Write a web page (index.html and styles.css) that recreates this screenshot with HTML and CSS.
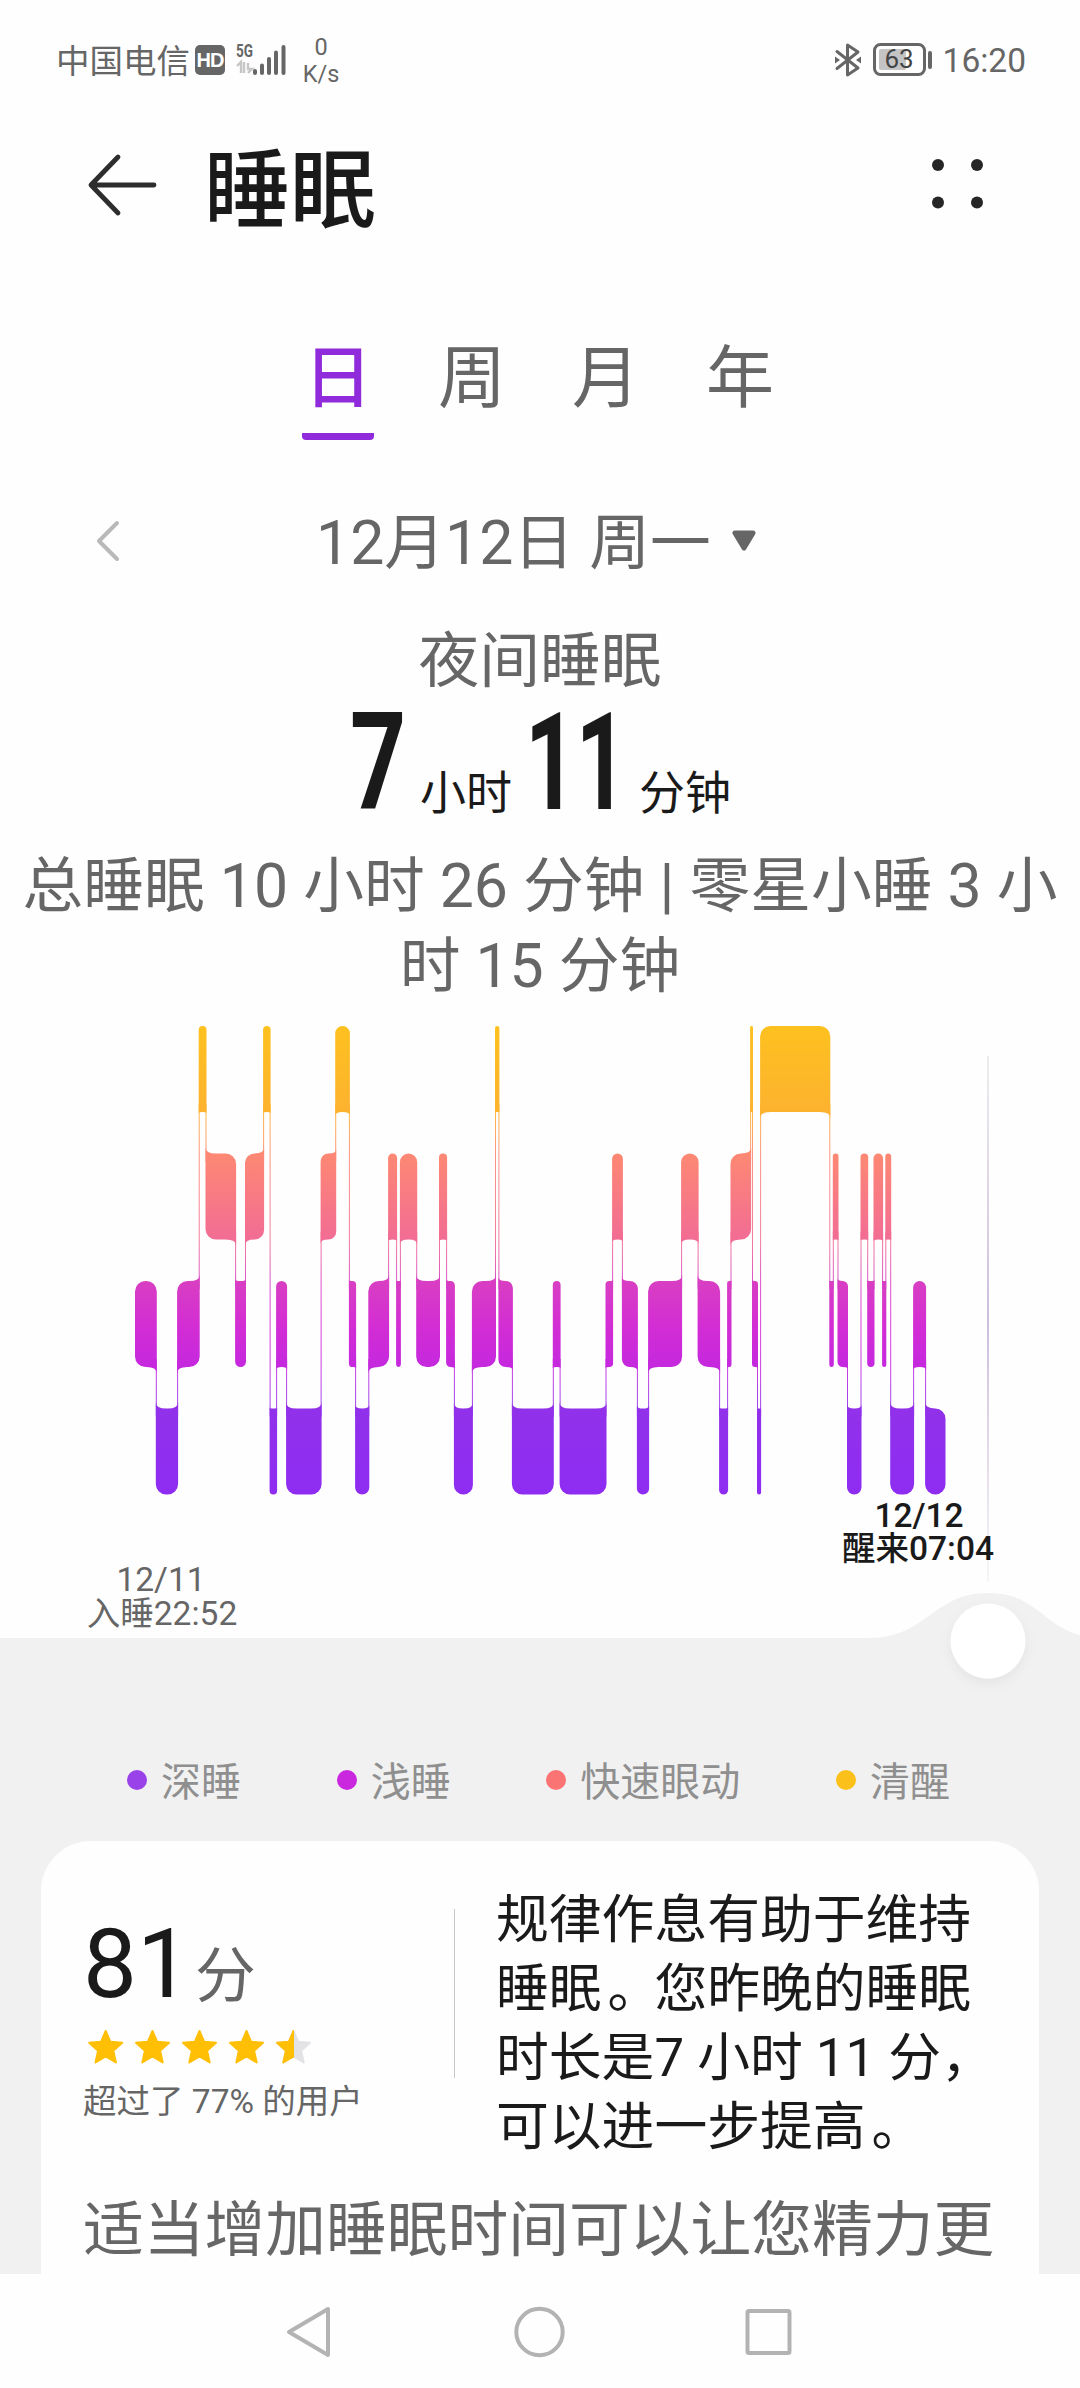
FILE: index.html
```html
<!DOCTYPE html>
<html lang="zh-CN">
<head>
<meta charset="utf-8">
<title>睡眠</title>
<link rel="stylesheet" href="styles.css">
</head>
<body>
<div class="screen">
  <div class="status">
    <span class="carrier">中国电信</span>
    <span class="hd">HD</span>
    <svg class="signal" width="52" height="36" viewBox="0 0 52 36">
      <text class="five-g" x="1" y="16" textLength="17" lengthAdjust="spacingAndGlyphs">5G</text>
      <path d="M2 25l4-4v11M9 21v11M13 32l4-4h-4v-6" fill="none" stroke="#c6c6c6" stroke-width="2.4"/>
      <g stroke="#666" stroke-width="4" stroke-linecap="round">
        <path d="M20 30v2M27 24.500v7.500M34 18v14M41 11.500v20.500M48.500 6v26"/>
      </g>
    </svg>
    <span class="speed">0<br>K/s</span>
    <span class="fill"></span>
    <svg class="bt" width="28" height="36" viewBox="0 0 28 36">
      <path d="M2 9.500 L23 26 L12.500 33 V3 L23 10 L2 26.500" fill="none" stroke="#666" stroke-width="3" stroke-linejoin="round" stroke-linecap="round"/>
      <path d="M0 14.500l5 3.500l-5 3.500zM26 14.500l-5 3.500l5 3.500z" fill="#666"/>
    </svg>
    <svg class="battery" width="62" height="36" viewBox="0 0 62 36">
      <rect x="1.500" y="3.500" width="50" height="30" rx="6" fill="none" stroke="#666" stroke-width="3"/>
      <rect x="6" y="8" width="27" height="21" rx="2" fill="#c4c4c4"/>
      <text class="level" x="26" y="27">63</text>
      <path d="M57 12v14" stroke="#666" stroke-width="4" stroke-linecap="round"/>
    </svg>
    <span class="clock">16:20</span>
  </div>

  <div class="header">
    <svg width="72" height="66" viewBox="0 0 72 66">
      <path d="M32 5L5 33H68M5 33L32 61" fill="none" stroke="#2d2d2d" stroke-width="4.800" stroke-linecap="round" stroke-linejoin="round"/>
    </svg>
    <h1>睡眠</h1>
    <span class="fill"></span>
    <svg width="52" height="52" viewBox="0 0 52 52" fill="#262626">
      <circle cx="6" cy="6" r="6"/><circle cx="45" cy="6" r="6"/>
      <circle cx="6" cy="43.500" r="6"/><circle cx="45" cy="43.500" r="6"/>
    </svg>
  </div>

  <div class="tabs">
    <span class="tab active">日</span><span class="tab">周</span><span class="tab">月</span><span class="tab">年</span>
  </div>

  <div class="date">
    <svg class="prev" width="28" height="44" viewBox="0 0 28 44">
      <path d="M22 4L4 22L22 40" fill="none" stroke="#b9b9b9" stroke-width="4" stroke-linecap="round" stroke-linejoin="round"/>
    </svg>
    <span class="day">12月12日 周一</span>
    <svg class="caret" width="26" height="22" viewBox="0 0 26 22">
      <path d="M4 3H22L13 18Z" fill="#666" stroke="#666" stroke-width="5" stroke-linejoin="round"/>
    </svg>
  </div>

  <div class="night">夜间睡眠</div>
  <div class="total"><span class="num one"><b>7</b></span><span class="unit">小时</span><span class="num two"><b>11</b></span><span class="unit">分钟</span></div>
  <div class="summary">总睡眠 10 小时 26 分钟 | 零星小睡 3 小<br>时 15 分钟</div>

  <svg class="chart" width="1080" height="738" viewBox="0 1000 1080 738">
    <defs>
      <linearGradient id="stage" gradientUnits="userSpaceOnUse" x1="0" y1="1026" x2="0" y2="1495">
        <stop offset="0" stop-color="#fdc11f"/>
        <stop offset=".184" stop-color="#fdb22f"/>
        <stop offset=".272" stop-color="#fd8873"/>
        <stop offset=".456" stop-color="#f26c94"/>
        <stop offset=".544" stop-color="#d83fc2"/>
        <stop offset=".64" stop-color="#d32dd4"/>
        <stop offset=".728" stop-color="#c428de"/>
        <stop offset=".816" stop-color="#9131ea"/>
        <stop offset="1" stop-color="#8e2cf2"/>
      </linearGradient>
      <linearGradient id="cursor" x1="0" y1="0" x2="0" y2="1">
        <stop offset="0" stop-color="#ededed"/>
        <stop offset=".5" stop-color="#cdbfdc"/>
        <stop offset="1" stop-color="#f6f6f6"/>
      </linearGradient>
      <filter id="soft" x="-50%" y="-50%" width="200%" height="200%">
        <feDropShadow dx="0" dy="5" stdDeviation="6" flood-color="#000" flood-opacity=".05"/>
      </filter>
    </defs>
    <path d="M0 1638H868C928 1638 932 1593 988 1593C1036 1593 1042 1625 1080 1635V1738H0Z" fill="#f1f1f1"/>
    <rect x="987" y="1056" width="2" height="526" fill="url(#cursor)"/>
    <g id="stages" fill="url(#stage)"></g>
    <circle cx="988" cy="1641" r="37.500" fill="#fff" filter="url(#soft)"/>
    <g class="start"><text x="161" y="1591">12/11</text><text x="162" y="1625">入睡22:52</text></g>
    <g class="end"><text x="919" y="1527">12/12</text><text x="918" y="1560">醒来07:04</text></g>
  </svg>

  <div class="lower">
    <div class="legend">
      <div class="key deep"><span>深睡</span></div><div class="key light"><span>浅睡</span></div><div class="key rem"><span>快速眼动</span></div><div class="key awake"><span>清醒</span></div>
    </div>
    <div class="card">
      <div class="row">
        <div class="score">
          <div class="points"><span class="big">81</span><span class="fen">分</span></div>
          <svg class="stars" width="240" height="36" viewBox="0 0 240 36">
            <defs>
              <path id="star" d="M0-16L4.700-5.200L16.500-4.200L7.600 3.700L10.200 15.500L0 9.400L-10.200 15.500L-7.600 3.700L-16.500-4.200L-4.700-5.200Z" stroke-width="2" stroke-linejoin="round"/>
              <clipPath id="half"><rect x="-20" y="-20" width="20.500" height="40"/></clipPath>
            </defs>
            <g fill="#ffbf05" stroke="#ffbf05">
              <use href="#star" x="22.700" y="18"/><use href="#star" x="69.500" y="18"/><use href="#star" x="116.500" y="18"/><use href="#star" x="163.500" y="18"/>
            </g>
            <g transform="translate(210.500 18)">
              <use href="#star" fill="#e3e3e6" stroke="#e3e3e6"/>
              <use href="#star" fill="#ffbf05" stroke="#ffbf05" clip-path="url(#half)"/>
            </g>
          </svg>
          <div class="rank">超过了 77% 的用户</div>
        </div>
        <div class="advice">规律作息有助于维持<br>睡眠<span class="stop">。</span>您昨晚的睡眠<br>时长是7 小时 11 分，<br>可以进一步提高<span class="stop">。</span></div>
      </div>
      <div class="more">适当增加睡眠时间可以让您精力更</div>
    </div>
  </div>

  <div class="nav">
    <svg width="520" height="56" viewBox="0 0 520 56" fill="none" stroke="#b3b3b3" stroke-width="4" stroke-linejoin="round">
      <path d="M48 5V51L9 28Z"/>
      <circle cx="259.500" cy="28" r="23.200"/>
      <rect x="467.500" y="7" width="42" height="42" rx="1.500"/>
    </svg>
  </div>
</div>
<script src="chart.js"></script>
</body>
</html>
```
FILE: chart.js
```js
// Sleep stages in order: [stage, end x]. Stages: 0 awake, 1 REM, 2 light, 3 deep.
const START = 135;
const stages = [
  [2,156.3],[3,177.6],[2,199.2],[0,206],[1,235.6],[2,245.5],[1,263.6],[0,270.1],[3,276.6],[2,286.6],
  [3,321.1],[1,335.7],[0,349.4],[2,355.6],[3,368.8],[2,388.6],[1,396.6],[2,400.4],[1,416.7],[2,439.5],
  [1,446.6],[2,454.4],[3,472.4],[2,495.5],[0,498.9],[2,512.4],[3,553.3],[2,560.1],[3,606],[2,612.6],
  [1,622.4],[2,637.4],[3,648.6],[2,681.6],[1,698.1],[2,719.6],[3,727.6],[2,731],[1,750.6],[0,752.5],
  [2,757.5],[3,760.6],[0,829.8],[2,833.3],[1,838],[2,847.5],[3,861],[1,867.7],[2,874],[1,882.6],
  [2,885.8],[1,890.7],[3,913.6],[2,925.6],[3,945]
];
const TOP = [1026, 1153.5, 1281, 1408.5];
const HEIGHT = 86;
const group = document.getElementById('stages');

function add(name, attrs) {
  const node = document.createElementNS('http://www.w3.org/2000/svg', name);
  for (const key in attrs) node.setAttribute(key, attrs[key]);
  group.appendChild(node);
}

let x = START;
stages.forEach(([level, end], i) => {
  const a = i ? x - 0.5 : x;
  const b = end + 0.5;
  const r = Math.min(10.5, (b - a) / 2);
  const f = Math.max(0, Math.min(7, r * 0.75 - 1.5));
  const t = TOP[level];
  const u = t + HEIGHT;
  const left = i ? stages[i - 1][0] : null;
  const right = i < stages.length - 1 ? stages[i + 1][0] : null;
  // A corner flares towards the neighbouring stage and is rounded on the other side.
  const above = n => n !== null && n < level;
  const below = n => n !== null && n > level;
  const arc = (px, py) => `A${r} ${r} 0 0 1 ${px} ${py}`;
  const d = [
    above(left) ? `M${a} ${t - f}Q${a} ${t} ${a + r} ${t}` : `M${a} ${t + r}${arc(a + r, t)}`,
    `H${b - r}`,
    above(right) ? `Q${b} ${t} ${b} ${t - f}` : arc(b, t + r),
    `V${below(right) ? u + f : u - r}`,
    below(right) ? `Q${b} ${u} ${b - r} ${u}` : arc(b - r, u),
    `H${a + r}`,
    below(left) ? `Q${a} ${u} ${a} ${u + f}` : arc(a, u - r),
    'Z'
  ].join('');
  add('path', { d });
  if (right !== null) {
    const y1 = TOP[Math.min(level, right)] + HEIGHT - 8;
    const y2 = TOP[Math.max(level, right)] + 8;
    add('rect', { x: end - 0.5, y: y1, width: 1, height: y2 - y1, opacity: 0.9 });
  }
  x = end;
});
```
FILE: styles.css
```css
* { box-sizing: border-box; }
body { margin: 0; background: #fefefe; font-family: Roboto, "Noto Sans CJK SC", sans-serif; color: #666; }
.screen { width: 1080px; height: 2388px; overflow: hidden; display: flex; flex-direction: column; }
.screen > * { flex: none; }
.fill { flex: 1; }
svg { display: block; flex: none; overflow: visible; }

.status { height: 120px; padding: 0 54px 0 56px; display: flex; align-items: center; }
.carrier { font-size: 33.500px; line-height: 40px; padding-top: 3px; }
.hd { width: 30px; height: 30px; margin-left: 5px; border-radius: 5px; background: #666; color: #fff; font: 700 20px/30px "Liberation Sans", sans-serif; letter-spacing: -1px; text-align: center; }
.signal { margin-left: 10px; margin-top: -2px; }
.five-g { font-size: 19px; font-weight: 700; fill: #666; }
.speed { margin-left: 15px; width: 38px; font-size: 23.500px; line-height: 27px; text-align: center; padding-top: 2px; }
.bt { margin-right: 10px; }
.battery { margin-right: 8px; margin-top: -2px; }
.level { font-size: 26px; fill: #444; text-anchor: middle; }
.clock { font-size: 33.500px; line-height: 40px; padding-top: 1px; }

.header { height: 130px; padding: 0 96px 0 86px; display: flex; align-items: center; }
h1 { margin: 0 0 0 46px; padding-top: 14px; font-size: 86px; line-height: 100px; font-weight: 500; color: #1a1a1a; }

.tabs { height: 210px; padding: 74px 0 0 302px; display: flex; gap: 62px; }
.tab { width: 72px; height: 116px; font-size: 68px; line-height: 110px; text-align: center; }
.active { color: #8f2bdb; font-weight: 500; border-bottom: 7px solid #8f2bdb; border-radius: 0 0 4px 4px; }

.date { height: 162px; padding: 0 0 0 95px; display: flex; align-items: center; }
.day { margin-left: 193px; font-size: 60.750px; line-height: 80px; white-space: pre; padding-top: 6px; }
.caret { margin-left: 20px; }

.night { height: 76px; font-size: 60.750px; line-height: 79px; text-align: center; }
.total { height: 149px; padding-left: 350px; display: flex; align-items: baseline; color: #1a1a1a; line-height: 129px; }
.num { font-size: 136px; }
.num b { display: inline-block; font-weight: 700; transform: scaleX(.72); transform-origin: 0 0; }
.one { width: 70px; }
.two { width: 117px; padding-left: 3px; }
.num.two b { transform: scaleX(.66); letter-spacing: -1px; }
.unit { width: 102px; font-size: 46px; }
.summary { height: 153px; font-size: 60.750px; line-height: 80px; text-align: center; white-space: nowrap; }

.chart { font-size: 33.500px; text-anchor: middle; }
.start { fill: #666; }
.end { fill: #1a1a1a; font-weight: 500; }

.lower { height: 536px; background: #f1f1f1; }
.legend { height: 103px; padding: 0 130px 19px 127px; display: flex; justify-content: space-between; align-items: center; font-size: 40px; line-height: 50px; color: #8f8f8f; }
.key { display: flex; align-items: center; gap: 14px; }
.key::before { content: ""; width: 20px; height: 20px; border-radius: 50%; }
.key span { padding-top: 5px; }
.deep::before { background: #9a42ea; }
.light::before { background: #c928df; }
.rem::before { background: #fb7474; }
.awake::before { background: #fcc01a; }

.card { height: 433px; margin: 0 41px; padding: 45px 42px 0; border-radius: 50px 50px 0 0; background: #fefefe; }
.row { display: flex; height: 305px; }
.score { width: 372px; height: 169px; margin-top: 23px; border-right: 1px solid #c8c8c8; }
.points { height: 120px; line-height: 110px; display: flex; align-items: baseline; }
.big { font-size: 96px; color: #1a1a1a; }
.fen { font-size: 60.750px; margin-left: 4px; }
.rank { font-size: 33.500px; line-height: 50px; margin-top: 12px; white-space: nowrap; }
.advice { margin-left: 41px; font-size: 52.800px; line-height: 69px; color: #1a1a1a; white-space: nowrap; }
.stop { display: inline-block; width: 1em; text-indent: 6px; }
.more { font-size: 60.750px; line-height: 80px; white-space: nowrap; }
.nav { height: 114px; padding: 30px 280px; }
```
